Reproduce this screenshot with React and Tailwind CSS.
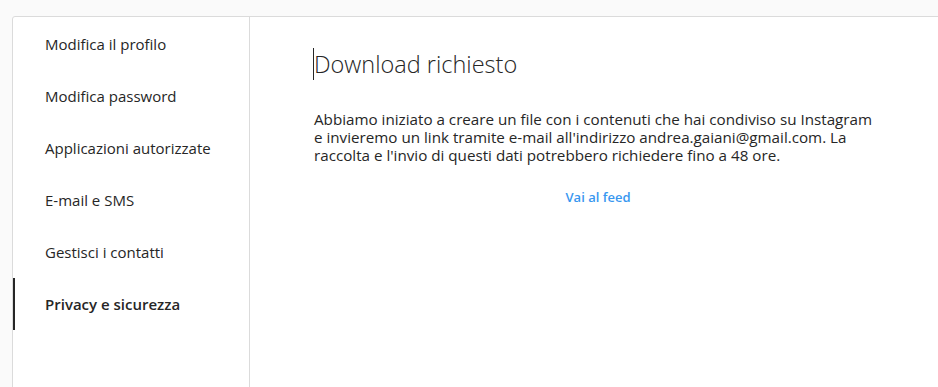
const items = [
  'Modifica il profilo',
  'Modifica password',
  'Applicazioni autorizzate',
  'E-mail e SMS',
  'Gestisci i contatti',
  'Privacy e sicurezza',
]

export default function App() {
  return (
    <div
      className="h-[387px] bg-[#fafafa] pt-4 pl-3 overflow-hidden text-[#262626]"
      style={{ fontFamily: '"Open Sans", "Noto Sans", Arial, sans-serif' }}
    >
      <div className="flex w-[935px] h-[380px] bg-white border border-[#dbdbdb] rounded-[3px]">
        <ul className="w-[237px] shrink-0 border-r border-[#dbdbdb] pt-px">
          {items.map((label) => {
            const active = label === 'Privacy e sicurezza'
            return (
              <li
                key={label}
                className={`h-[52px] flex items-center pl-[30px] border-l-2 text-[15px] leading-5 ${
                  active ? 'border-[#262626] font-semibold' : 'border-transparent'
                }`}
              >
                {label}
              </li>
            )
          })}
        </ul>
        <main className="flex-1 px-16 pt-[31px]">
          <h2 className="text-[23.5px] font-light leading-8 border-l border-[#262626] -ml-px">
            Download richiesto
          </h2>
          <p className="mt-[30px] text-[15.2px] leading-[18px]">
            Abbiamo iniziato a creare un file con i contenuti che hai condiviso su Instagram e invieremo un link
            tramite e-mail all'indirizzo andrea.gaiani@gmail.com. La raccolta e l'invio di questi dati potrebbero
            richiedere fino a 48 ore.
          </p>
          <div className="mt-5 text-center">
            <a className="text-[13px] font-semibold text-[#3897f0] leading-[18px]">Vai al feed</a>
          </div>
        </main>
      </div>
    </div>
  )
}
